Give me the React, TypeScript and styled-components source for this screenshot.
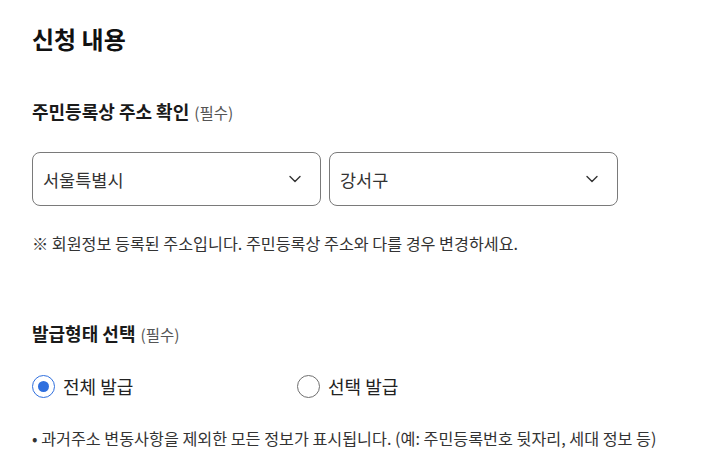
import React, { useState } from "react";
import styled, { createGlobalStyle } from "styled-components";

const GlobalStyle = createGlobalStyle`
  html, body {
    margin: 0;
    padding: 0;
    background: #ffffff;
  }
  body {
    font-family: "Noto Sans CJK KR", "Noto Sans", sans-serif;
    color: #1a1a1a;
  }
`;

const Page = styled.div`
  padding: 22px 32px 0 32px;
  display: flex;
  flex-direction: column;
`;

const Title = styled.h2`
  margin: 0;
  font-size: 24px;
  line-height: 33px;
  font-weight: 700;
  color: #111;
`;

const Section = styled.section<{ $top: number }>`
  margin-top: ${(p) => p.$top}px;
  display: flex;
  flex-direction: column;
`;

const Label = styled.h3`
  margin: 0;
  font-size: 18px;
  line-height: 27px;
  font-weight: 700;
  color: #1a1a1a;
`;

const Required = styled.span`
  font-size: 15.5px;
  font-weight: 400;
  color: #555;
  margin-left: 5px;
`;

const SelectRow = styled.div`
  margin-top: 26px;
  display: flex;
  gap: 8px;
`;

const SelectBox = styled.div`
  box-sizing: border-box;
  width: 289px;
  height: 54px;
  border: 1px solid #7a7a7a;
  border-radius: 8px;
  padding: 0 19px 0 10px;
  display: flex;
  align-items: center;
  justify-content: space-between;
  font-size: 17.5px;
  color: #333;
  background: #fff;
`;

const Chevron = () => (
  <svg width="12" height="8" viewBox="0 0 12 8" fill="none">
    <path d="M1 1.5 L6 6.5 L11 1.5" stroke="#333" strokeWidth="1.4" strokeLinecap="round" strokeLinejoin="round" />
  </svg>
);

const Note = styled.p<{ $top: number }>`
  margin: ${(p) => p.$top}px 0 0 0;
  font-size: 16.2px;
  line-height: 22px;
  color: #333;
  white-space: nowrap;
`;

const RadioRow = styled.div`
  margin-top: 25px;
  display: grid;
  grid-template-columns: 265px auto;
  align-items: center;
`;

const RadioItem = styled.label`
  display: flex;
  align-items: center;
  gap: 8px;
  font-size: 18px;
  line-height: 26px;
  color: #222;
  cursor: pointer;
`;

const RadioCircle = styled.span<{ $checked: boolean }>`
  box-sizing: border-box;
  width: 23px;
  height: 23px;
  border-radius: 50%;
  border: ${(p) => (p.$checked ? "1.6px solid #2f6fde" : "1px solid #6f6f6f")};
  display: flex;
  align-items: center;
  justify-content: center;
  flex-shrink: 0;
  &::after {
    content: "";
    display: ${(p) => (p.$checked ? "block" : "none")};
    width: 11px;
    height: 11px;
    border-radius: 50%;
    background: #2f6fde;
  }
`;

export default function App() {
  const [kind, setKind] = useState<"all" | "select">("all");
  return (
    <>
      <GlobalStyle />
      <Page>
        <Title>신청 내용</Title>
        <Section $top={43}>
          <Label>
            주민등록상 주소 확인<Required>(필수)</Required>
          </Label>
          <SelectRow>
            <SelectBox>
              서울특별시
              <Chevron />
            </SelectBox>
            <SelectBox>
              강서구
              <Chevron />
            </SelectBox>
          </SelectRow>
          <Note $top={26}>※ 회원정보 등록된 주소입니다. 주민등록상 주소와 다를 경우 변경하세요.</Note>
        </Section>
        <Section $top={66}>
          <Label>
            발급형태 선택<Required>(필수)</Required>
          </Label>
          <RadioRow>
            <RadioItem onClick={() => setKind("all")}>
              <RadioCircle $checked={kind === "all"} />
              전체 발급
            </RadioItem>
            <RadioItem onClick={() => setKind("select")}>
              <RadioCircle $checked={kind === "select"} />
              선택 발급
            </RadioItem>
          </RadioRow>
          <Note $top={28}>• 과거주소 변동사항을 제외한 모든 정보가 표시됩니다. (예: 주민등록번호 뒷자리, 세대 정보 등)</Note>
        </Section>
      </Page>
    </>
  );
}
